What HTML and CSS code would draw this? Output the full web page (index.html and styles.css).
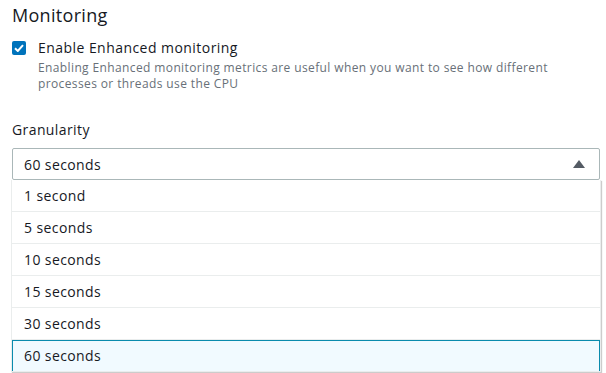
FILE: index.html
```html
<!DOCTYPE html>
<html lang="en">
<head>
    <meta charset="UTF-8">
    <title>Monitoring</title>
    <link rel="stylesheet" href="styles.css">
</head>
<body>
<section class="panel">
    <h2 class="title">Monitoring</h2>
    <label class="check">
        <span class="box">
            <svg width="10" height="8" viewBox="0 0 10 8"><path d="M1 4.2 L3.8 7 L9 1.2" fill="none" stroke="#fff" stroke-width="2"/></svg>
        </span>
        <span class="check-text">
            <span class="check-label">Enable Enhanced monitoring</span>
            <span class="check-desc">Enabling Enhanced monitoring metrics are useful when you want to see how different processes or threads use the CPU</span>
        </span>
    </label>

    <div class="field">
        <div class="field-label">Granularity</div>
        <div class="select-wrap">
            <div class="select">
                <span>60 seconds</span>
                <svg class="caret" width="12" height="8" viewBox="0 0 12 8"><path d="M0 8 L6 0 L12 8 Z" fill="#545b64"/></svg>
            </div>
            <ul class="options">
                <li>1 second</li>
                <li>5 seconds</li>
                <li>10 seconds</li>
                <li>15 seconds</li>
                <li>30 seconds</li>
                <li class="selected">60 seconds</li>
            </ul>
        </div>
    </div>
</section>
</body>
</html>
```
FILE: styles.css
```css
body {
    margin: 0;
    min-height: 100vh;
    background: #fff;
    font-family: "Open Sans", "Noto Sans", sans-serif;
    color: #16191f;
}
.panel {
    padding: 1px 6px 0 12px;
    min-height: 400px;
}
.title {
    margin: 0;
    font-size: 18px;
    font-weight: 400;
    line-height: 28px;
    letter-spacing: 0.3px;
}
.check {
    display: flex;
    gap: 12px;
    margin-top: 10px;
}
.box {
    flex: none;
    width: 14px;
    height: 14px;
    margin-top: 2px;
    border-radius: 2px;
    background: #0073bb;
    display: flex;
    align-items: center;
    justify-content: center;
}
.check-text {
    display: flex;
    flex-direction: column;
}
.check-label {
    font-size: 14px;
    line-height: 18px;
    letter-spacing: 0.45px;
}
.check-desc {
    margin-top: 3px;
    font-size: 12px;
    line-height: 16px;
    letter-spacing: 0.38px;
    color: #687078;
    padding-right: 30px;
}
.field {
    margin-top: 28px;
}
.field-label {
    font-size: 14px;
    line-height: 20px;
    letter-spacing: 0.4px;
    margin-bottom: 8px;
}
.select-wrap {
    position: relative;
}
.select {
    height: 30px;
    border: 1px solid #aab7b8;
    border-radius: 2px;
    display: flex;
    align-items: center;
    justify-content: space-between;
    padding: 0 14px 0 11px;
    font-size: 14px;
    letter-spacing: 0.4px;
}
.caret {
    margin-top: -1px;
}
.options {
    position: absolute;
    top: 32px;
    left: -1px;
    right: -1px;
    margin: 0;
    padding: 0;
    list-style: none;
    background: #fff;
    border: 1px solid #eaeded;
    border-top: 0;
    box-shadow: 1px 1px 1px rgba(0, 0, 0, .2);
    z-index: 2;
}
.options li {
    height: 31px;
    line-height: 31px;
    padding-left: 12px;
    font-size: 14px;
    letter-spacing: 0.4px;
    border-bottom: 1px solid #eaeded;
}
.options li:last-child {
    border-bottom: 0;
}
.options .selected {
    background: #f1faff;
    border: 1px solid #0a8bad;
    height: 30px;
    line-height: 30px;
    padding-left: 11px;
}
```
